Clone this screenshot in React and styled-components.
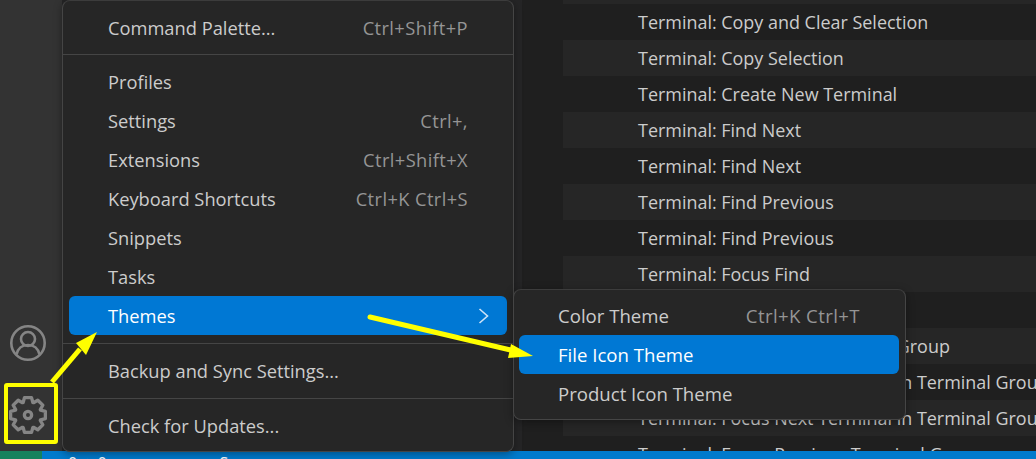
import React from 'react';
import styled, { createGlobalStyle } from 'styled-components';

const GlobalStyle = createGlobalStyle`
  html, body {
    margin: 0;
    padding: 0;
    background: #1f1f1f;
  }
`;

const Window = styled.div`
  position: relative;
  width: 1036px;
  height: 459px;
  overflow: hidden;
  display: flex;
  flex-direction: column;
  font-family: "Open Sans", "Noto Sans", sans-serif;
  font-size: 18.3px;
`;

const Body = styled.div`
  flex: 1;
  min-height: 0;
  display: flex;
`;

const ActivityBar = styled.div`
  width: 62px;
  flex-shrink: 0;
  background: #333333;
  display: flex;
  flex-direction: column;
  align-items: center;
  justify-content: flex-end;
  gap: 34px;
  padding-right: 7px;
  padding-bottom: 17px;
  box-sizing: border-box;
`;

const SideGap = styled.div`
  width: 460px;
  flex-shrink: 0;
  background: #252526;
`;

const ListPane = styled.div`
  flex: 1;
  min-width: 0;
  background: #1f1f1f;
  padding-left: 41px;
  margin-top: -32px;
`;

const ListRow = styled.div`
  height: 36px;
  line-height: 36px;
  padding-left: 75px;
  font-size: 17.95px;
  white-space: nowrap;
  color: #cccccc;
  background: ${({ $odd }) => ($odd ? '#262626' : 'transparent')};
`;

const StatusBar = styled.div`
  height: 8px;
  flex-shrink: 0;
  background: #007acc;
  display: flex;
  overflow: hidden;
`;

const RemoteBadge = styled.div`
  width: 42px;
  background: #16825d;
`;

const StatusText = styled.span`
  color: #ffffff;
  font-size: 16px;
  line-height: 22px;
  margin-top: 1px;
  margin-left: ${({ $gap }) => $gap}px;
  white-space: nowrap;
`;

const Menu = styled.div`
  position: absolute;
  left: 62px;
  top: 0;
  width: 452px;
  height: 452px;
  box-sizing: border-box;
  padding: 7px 6px 0;
  background: #262626;
  border: 1px solid #454545;
  border-top-color: #3c3c3c;
  border-radius: 8px;
  box-shadow: 0 2px 8px rgba(0, 0, 0, 0.36);
`;

const SubMenu = styled(Menu)`
  left: 513px;
  top: 289px;
  width: 393px;
  height: 131px;
  padding: 6px 6px 0 5px;
  font-size: 18.6px;
`;

const Item = styled.div`
  height: 39px;
  display: flex;
  align-items: center;
  justify-content: space-between;
  padding: 0 39px;
  border-radius: 6px;
  white-space: nowrap;
  color: ${({ $active }) => ($active ? '#ffffff' : '#cccccc')};
  background: ${({ $active }) => ($active ? '#0078d4' : 'transparent')};
`;

const Shortcut = styled.span`
  color: #959595;
  letter-spacing: 0.4px;
`;

const Chevron = styled.svg`
  position: absolute;
  right: 23px;
  top: 306px;
  width: 12px;
  height: 18px;
`;

const Separator = styled.div`
  height: ${({ $height }) => $height}px;
  display: flex;
  align-items: center;
  margin: 0 -6px;

  &::after {
    content: '';
    display: block;
    width: 100%;
    height: 1px;
    background: #454545;
  }
`;

const Overlay = styled.svg`
  position: absolute;
  left: 0;
  top: 0;
  pointer-events: none;
`;

const listLabels = [
  'Terminal: Copy and Clear Selection',
  'Terminal: Copy Selection',
  'Terminal: Create New Terminal',
  'Terminal: Find Next',
  'Terminal: Find Next',
  'Terminal: Find Previous',
  'Terminal: Find Previous',
  'Terminal: Focus Find',
  'Terminal: Focus Hover',
  'Terminal: Focus Next Terminal Group',
  'Terminal: Focus Next Terminal in Terminal Group',
  'Terminal: Focus Next Terminal in Terminal Group',
  'Terminal: Focus Previous Terminal Group',
];

const gearPath = () => {
  const points = [];
  for (let i = 0; i < 8; i += 1) {
    const a = (i * Math.PI) / 4 - Math.PI / 2;
    const spreads = [
      [-0.37, 8.5],
      [-0.2, 11.2],
      [0.2, 11.2],
      [0.37, 8.5],
    ];
    spreads.forEach(([d, r]) => {
      points.push(`${(12 + Math.cos(a + d) * r).toFixed(2)} ${(12 + Math.sin(a + d) * r).toFixed(2)}`);
    });
  }
  return `M${points.join('L')}Z`;
};

const GearIcon = () => (
  <svg width="38" height="38" viewBox="0 0 24 24" fill="none" stroke="#858585" strokeWidth="2.100" strokeLinejoin="round">
    <path d={gearPath()} />
    <circle cx="12" cy="12" r="2.300" />
  </svg>
);

const AccountIcon = () => (
  <svg width="38" height="38" viewBox="0 0 38 38" fill="none" stroke="#858585" strokeWidth="2.600">
    <circle cx="19" cy="19" r="16.700" />
    <circle cx="19" cy="15" r="7" />
    <path d="M7.500 30.500c1.500-6.500 6-9.500 11.500-9.500s10 3 11.500 9.500" />
  </svg>
);

const Annotations = () => (
  <Overlay width="1036" height="459" viewBox="0 0 1036 459">
    <rect x="6" y="385" width="50" height="57" rx="1" fill="none" stroke="#ffff00" strokeWidth="4" />
    <path d="M52 382L80 349" stroke="#ffff00" strokeWidth="5" fill="none" />
    <path d="M97 332L76 343L86 355Z" fill="#ffff00" />
    <path d="M370 317L515 351" stroke="#ffff00" strokeWidth="5" strokeLinecap="round" fill="none" />
    <path d="M533 356L511 344L508 358Z" fill="#ffff00" />
  </Overlay>
);

const App = () => (
  <>
    <GlobalStyle />
    <Window>
      <Body>
        <ActivityBar>
          <AccountIcon />
          <GearIcon />
        </ActivityBar>
        <SideGap />
        <ListPane>
          <ListRow $odd />
          {listLabels.map((label, i) => (
            <ListRow key={i} $odd={i % 2 === 1}>{label}</ListRow>
          ))}
        </ListPane>
      </Body>
      <StatusBar>
        <RemoteBadge />
        <StatusText $gap={26}>0 △ 0</StatusText>
        <StatusText $gap={113}>Spaces</StatusText>
      </StatusBar>

      <Menu>
        <Item>Command Palette...<Shortcut>Ctrl+Shift+P</Shortcut></Item>
        <Separator $height={15} />
        <Item>Profiles</Item>
        <Item>Settings<Shortcut>Ctrl+,</Shortcut></Item>
        <Item>Extensions<Shortcut>Ctrl+Shift+X</Shortcut></Item>
        <Item>Keyboard Shortcuts<Shortcut>Ctrl+K Ctrl+S</Shortcut></Item>
        <Item>Snippets</Item>
        <Item>Tasks</Item>
        <Item $active>Themes</Item>
        <Chevron viewBox="0 0 12 18" fill="none" stroke="#cfe4f7" strokeWidth="1.6">
          <path d="M1.500 2l8 7-8 7" />
        </Chevron>
        <Separator $height={16} />
        <Item>Backup and Sync Settings...</Item>
        <Separator $height={16} />
        <Item>Check for Updates...</Item>
      </Menu>

      <SubMenu>
        <Item>Color Theme<Shortcut>Ctrl+K Ctrl+T</Shortcut></Item>
        <Item $active>File Icon Theme</Item>
        <Item>Product Icon Theme</Item>
      </SubMenu>

      <Annotations />
    </Window>
  </>
);

export default App;
